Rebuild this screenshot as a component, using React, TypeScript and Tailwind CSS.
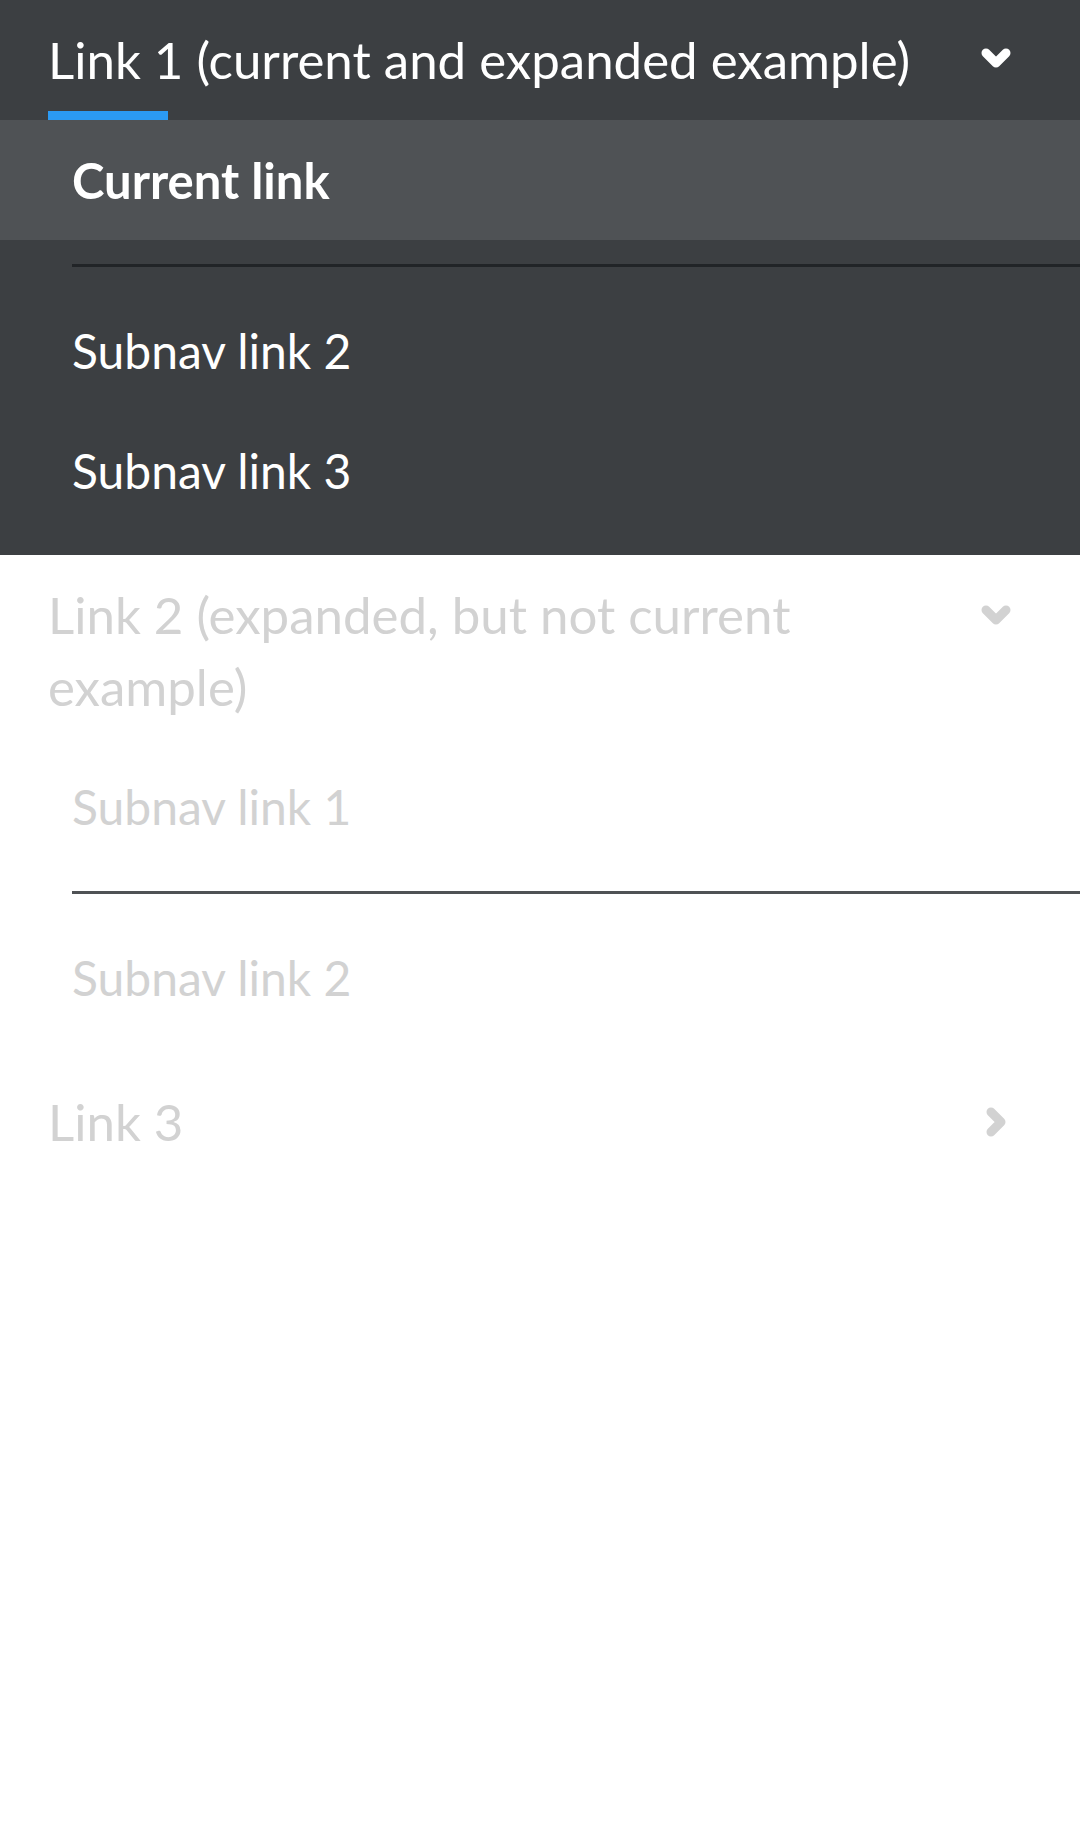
import React from 'react';

function ChevronDown({ className }: { className?: string }) {
  return (
    <svg className={className} width="30" height="21" viewBox="0 0 30 21" fill="none" stroke="currentColor">
      <path d="M5 5 L15 15 L25 5" strokeWidth={9} strokeLinecap="round" strokeLinejoin="round" />
    </svg>
  );
}

function ChevronRight({ className }: { className?: string }) {
  return (
    <svg className={className} width="21" height="30" viewBox="0 0 21 30" fill="none" stroke="currentColor">
      <path d="M5 5 L15 15 L5 25" strokeWidth={9} strokeLinecap="round" strokeLinejoin="round" />
    </svg>
  );
}

export default function App() {
  return (
    <nav className="min-h-[1836px] w-full bg-white font-['Lato','Open_Sans',sans-serif] text-[48px] leading-[72px]">
      <ul>
        {/* Link 1: current + expanded */}
        <li className="bg-[#3c3f42]">
          <button type="button" className="relative flex w-full items-start py-6 pl-12 pr-12 text-left text-[51px] leading-[72px] text-white">
            <span className="flex-1">Link 1 (current and expanded example)</span>
            <span className="flex h-[72px] w-[72px] items-center justify-center">
              <ChevronDown className="mt-[-3px] text-white" />
            </span>
            <span className="absolute bottom-0 left-12 h-[9px] w-[120px] bg-[#2b9af3]" />
          </button>
          <ul className="pb-6 text-white">
            <li className="bg-[#4f5255] py-6 pl-[72px] pr-12 text-[49px] font-bold">Current link</li>
            <li className="my-6 ml-[72px] h-[3px] bg-[#212427]" />
            <li className="py-6 pl-[72px] pr-12">Subnav link 2</li>
            <li className="py-6 pl-[72px] pr-12">Subnav link 3</li>
          </ul>
        </li>

        {/* Link 2: expanded, not current */}
        <li>
          <button type="button" className="flex w-full items-start py-6 pl-12 pr-12 text-left text-[51px] leading-[72px] text-[#d2d2d2]">
            <span className="flex-1">Link 2 (expanded, but not current example)</span>
            <span className="flex h-[72px] w-[72px] items-center justify-center">
              <ChevronDown className="text-[#d2d2d2]" />
            </span>
          </button>
          <ul className="pb-6 text-[#d2d2d2]">
            <li className="py-6 pl-[72px] pr-12">Subnav link 1</li>
            <li className="my-6 ml-[72px] h-[3px] bg-[#4f5255]" />
            <li className="py-6 pl-[72px] pr-12">Subnav link 2</li>
          </ul>
        </li>

        {/* Link 3 */}
        <li>
          <button type="button" className="flex w-full items-start py-6 pl-12 pr-12 text-left text-[51px] leading-[72px] text-[#d2d2d2]">
            <span className="flex-1">Link 3</span>
            <span className="flex h-[72px] w-[72px] items-center justify-center">
              <ChevronRight className="text-[#d2d2d2]" />
            </span>
          </button>
        </li>
      </ul>
    </nav>
  );
}
